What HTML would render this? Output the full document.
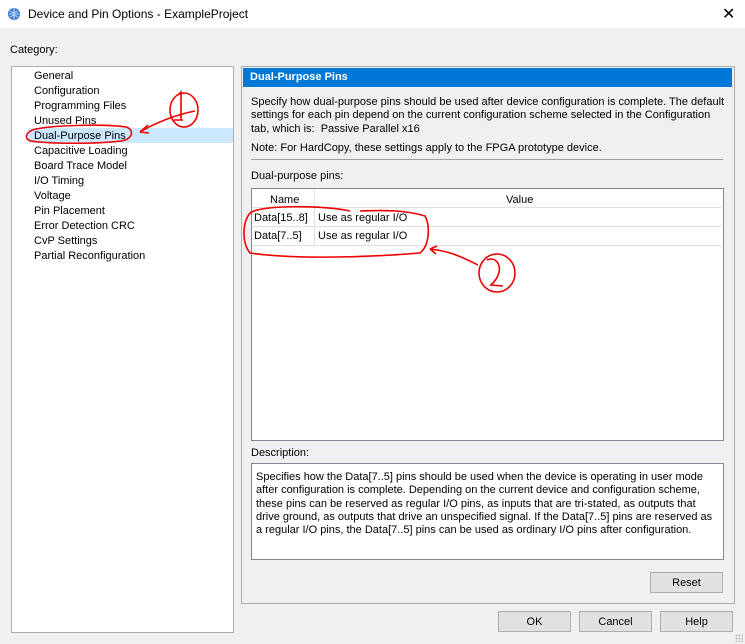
<!DOCTYPE html>
<html><head><style>
body{margin:0;width:745px;height:644px;background:#f0f0f0;font-family:"Liberation Sans",sans-serif;font-size:11px;color:#000;position:relative;overflow:hidden}
.a{position:absolute}
.btn{position:absolute;background:#e1e1e1;border:1px solid #adadad;text-align:center;line-height:20px;font-size:11px}
</style></head><body>
<div class="a" style="left:0;top:0;width:745px;height:28px;background:#fff"></div>
<svg class="a" style="left:7px;top:7px" width="14" height="14"><circle cx="7" cy="7" r="6" fill="#3a7bd5"/><path d="M2 7h10M7 1v12M3 4c3 2 5 2 8 0M3 10c3-2 5-2 8 0" stroke="#cde" fill="none"/></svg>
<div class="a" style="left:28px;top:7px;font-size:12px">Device and Pin Options - ExampleProject</div>
<div class="a" style="left:722px;top:4px;font-size:16px">✕</div>
<div class="a" style="left:10px;top:44px">Category:</div>
<div class="a" style="left:11px;top:66px;width:221px;height:565px;background:#fff;border:1px solid #adadad"></div>
<div class="a" style="left:28px;top:128px;width:205px;height:15px;background:#cce8ff"></div>
<div class="a" style="left:34px;top:69px;line-height:15px">General<br>Configuration<br>Programming Files<br>Unused Pins<br>Dual-Purpose Pins<br>Capacitive Loading<br>Board Trace Model<br>I/O Timing<br>Voltage<br>Pin Placement<br>Error Detection CRC<br>CvP Settings<br>Partial Reconfiguration</div>
<div class="a" style="left:241px;top:66px;width:492px;height:536px;border:1px solid #adadad"></div>
<div class="a" style="left:243px;top:68px;width:489px;height:19px;background:#0078d7;color:#fff;font-weight:bold;line-height:19px;text-indent:7px">Dual-Purpose Pins</div>
<div class="a" style="left:251px;top:96px;width:480px;line-height:13.3px">Specify how dual-purpose pins should be used after device configuration is complete. The default settings for each pin depend on the current configuration scheme selected in the Configuration tab, which is:&nbsp; Passive Parallel x16</div>
<div class="a" style="left:251px;top:142px">Note: For HardCopy, these settings apply to the FPGA prototype device.</div>
<div class="a" style="left:251px;top:159px;width:472px;height:1px;background:#a0a0a0"></div>
<div class="a" style="left:251px;top:170px">Dual-purpose pins:</div>
<div class="a" style="left:251px;top:188px;width:471px;height:251px;background:#fff;border:1px solid #828790"></div>
<div class="a" style="left:314px;top:189px;width:1px;height:18px;background:#e5e5e5"></div>
<div class="a" style="left:270px;top:194px">Name</div>
<div class="a" style="left:506px;top:194px">Value</div>
<div class="a" style="left:252px;top:207px;width:470px;height:1px;background:#e0e0e0"></div>
<div class="a" style="left:252px;top:226px;width:470px;height:1px;background:#e0e0e0"></div>
<div class="a" style="left:252px;top:245px;width:470px;height:1px;background:#e0e0e0"></div>
<div class="a" style="left:314px;top:208px;width:1px;height:37px;background:#e0e0e0"></div>
<div class="a" style="left:254px;top:212px">Data[15..8]</div><div class="a" style="left:318px;top:212px">Use as regular I/O</div>
<div class="a" style="left:254px;top:230px">Data[7..5]</div><div class="a" style="left:318px;top:230px">Use as regular I/O</div>
<div class="a" style="left:251px;top:447px">Description:</div>
<div class="a" style="left:251px;top:463px;width:460px;height:88px;background:#fff;border:1px solid #828790;padding:7px 7px 0 4px;line-height:13.3px">Specifies how the Data[7..5] pins should be used when the device is operating in user mode after configuration is complete. Depending on the current device and configuration scheme, these pins can be reserved as regular I/O pins, as inputs that are tri-stated, as outputs that drive ground, as outputs that drive an unspecified signal. If the Data[7..5] pins are reserved as a regular I/O pins, the Data[7..5] pins can be used as ordinary I/O pins after configuration.</div>
<div class="btn" style="left:650px;top:572px;width:71px;height:19px">Reset</div>
<div class="btn" style="left:498px;top:611px;width:71px;height:19px">OK</div>
<div class="btn" style="left:579px;top:611px;width:71px;height:19px">Cancel</div>
<div class="btn" style="left:660px;top:611px;width:71px;height:19px">Help</div>
<svg class="a" style="left:0;top:0" width="745" height="644" fill="none" stroke="#e00" stroke-width="1.6">
<path d="M36 129c20-4 70-5 90-2c8 2 8 12-5 14c-25 3-70 3-90 0c-8-2-5-10 5-12"/>
<path d="M195 111c-20 4-40 12-55 21M140 132l8-7M140 132l9 1"/>
<path d="M178 95l3-3v28M174 120h9"/>
<ellipse cx="184" cy="110" rx="14" ry="17"/>
<path d="M350 211c-30-6-90-6-100 2c-8 10-8 30 0 40c40 6 110 5 170 0c10-8 10-28 5-37c-20-6-40-6-65-5"/>
<path d="M478 265c-20-10-30-14-48-16M430 249l7-3M430 249l6 5"/>
<path d="M487 260c10-5 20 10 4 25l12 1"/>
<ellipse cx="497" cy="273" rx="18" ry="19"/>
</svg>
<div class="a" style="left:735px;top:634px;width:8px;height:8px;background:radial-gradient(#bbb 1px,transparent 1px) 0 0/3px 3px"></div>
</body></html>
